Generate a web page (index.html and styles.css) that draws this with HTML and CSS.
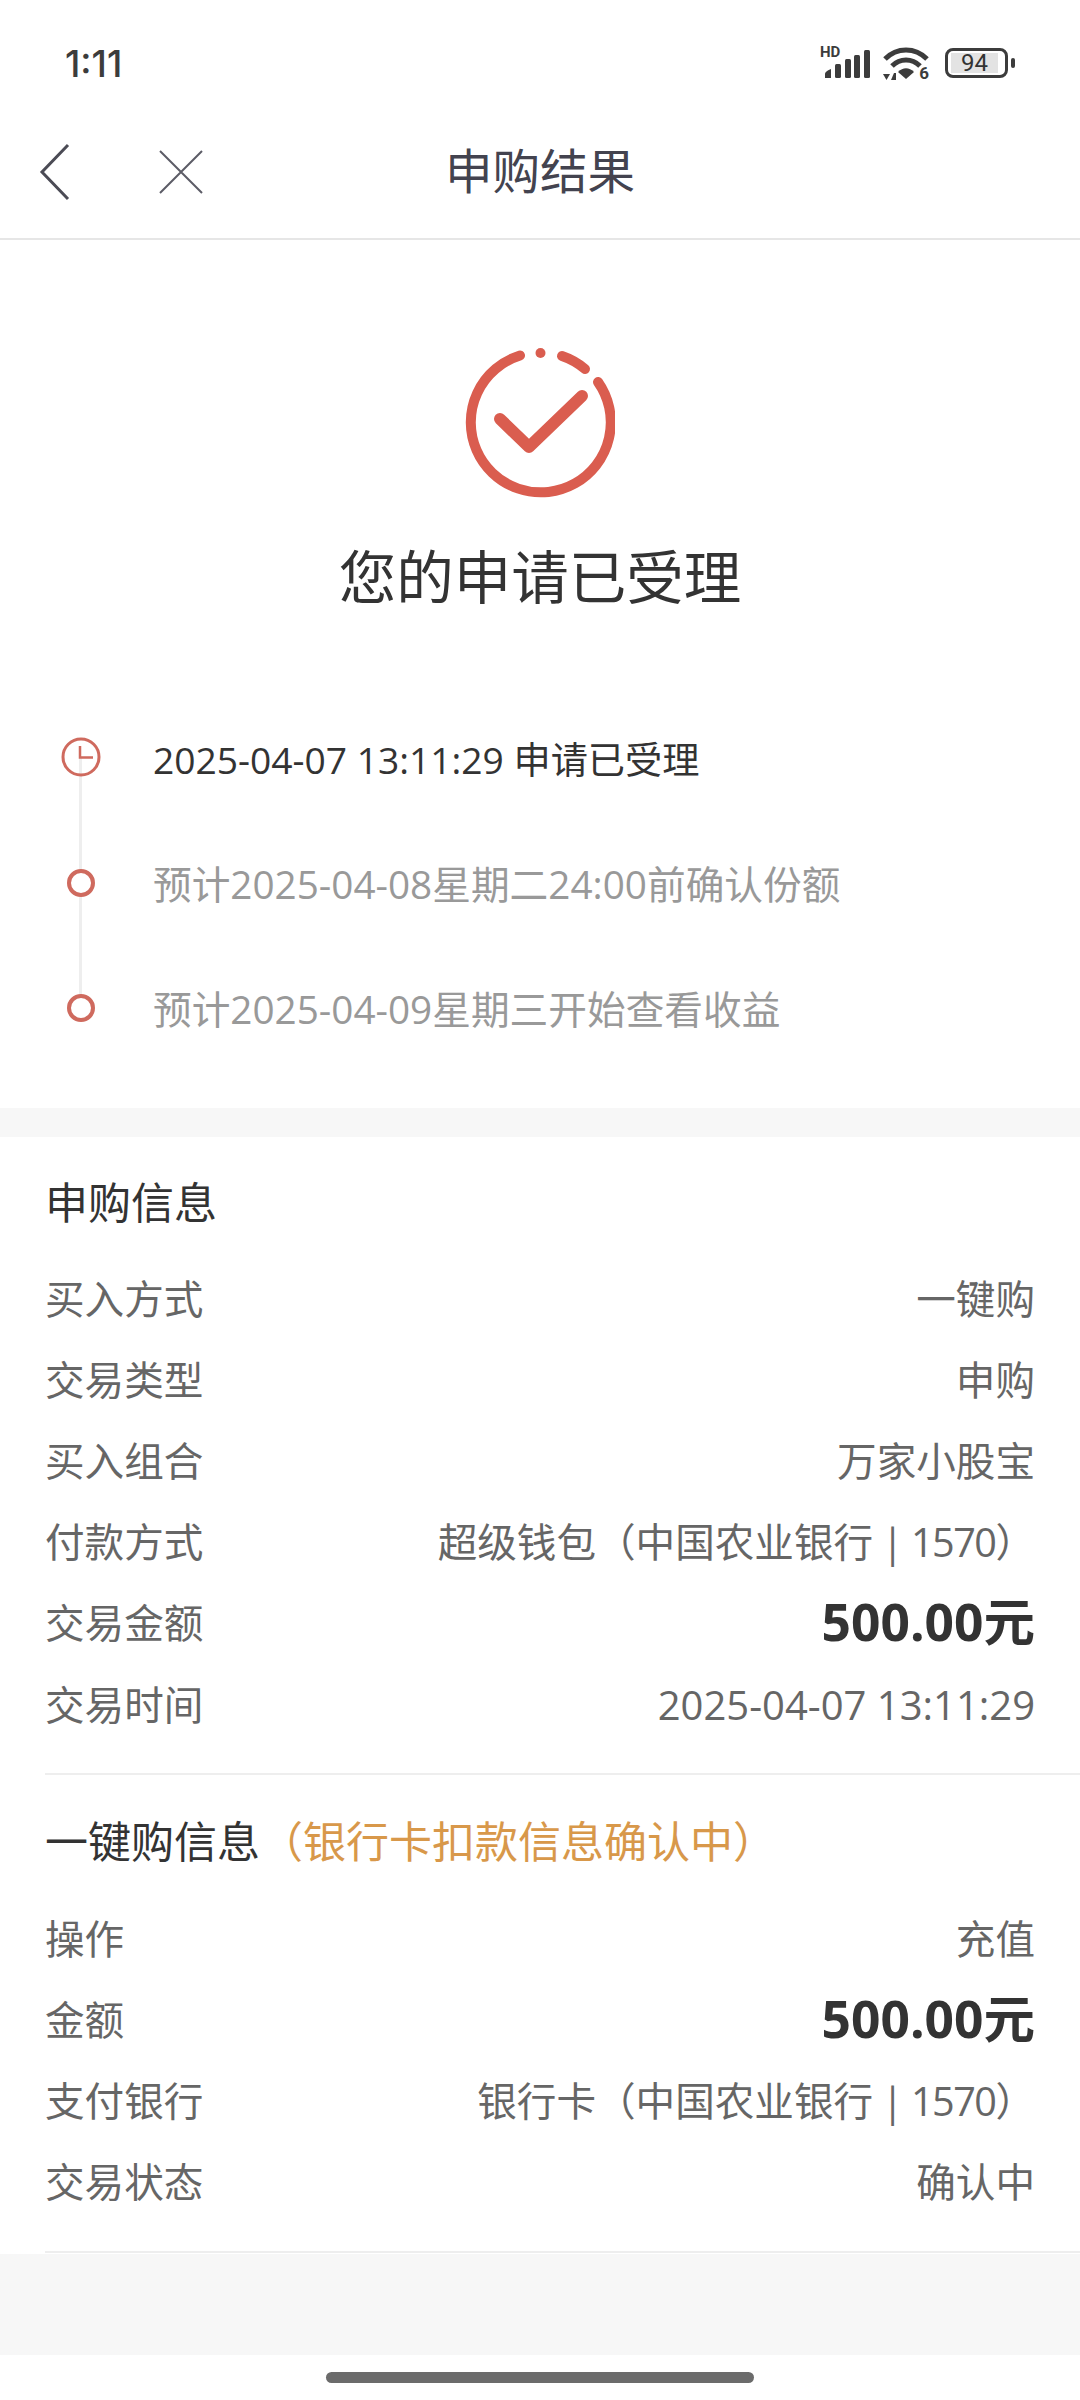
FILE: index.html
```html
<!DOCTYPE html>
<html lang="zh-CN">
<head>
<meta charset="utf-8">
<title>申购结果</title>
<link rel="stylesheet" href="styles.css">
</head>
<body>
<div class="phone">
  <header class="status">
    <span class="clock">1:11</span>
    <div class="status-icons">
      <span class="signal">
        <span class="hd">HD</span>
        <svg class="bars" width="45" height="28" viewBox="0 0 45 28"><g fill="#3c3c3c"><path d="M0 28V24C0 22 3 20 6 19V28Z"/><rect x="10" y="14" width="6" height="14" rx="1.500"/><rect x="20" y="9" width="6" height="19" rx="1.500"/><rect x="29" y="5" width="6" height="23" rx="1.500"/><rect x="39" y="0" width="6" height="28" rx="1.500"/></g></svg>
      </span>
      <span class="wifi">
        <svg width="46" height="35" viewBox="0 0 46 35"><g fill="none" stroke="#3c3c3c" stroke-width="5"><path d="M2 13C14 1 32 1 44 13"/><path d="M9 20C17 12 29 12 37 20"/></g><path d="M15 26C20 21 26 21 31 26L23 33Z" fill="#3c3c3c"/><g fill="#3c3c3c"><path d="M0 28h7l-3.500 6Z"/><path d="M8 34h5V27h-2Z"/></g></svg>
        <span class="wifi-6">6</span>
      </span>
      <span class="battery"><span class="battery-body"><span class="battery-fill">94</span></span><span class="battery-cap"></span></span>
    </div>
  </header>

  <nav class="nav">
    <svg class="back" width="32" height="58" viewBox="0 0 32 58"><path d="M29 2L3 29L29 56" fill="none" stroke="#4b4b55" stroke-width="3"/></svg>
    <svg class="close" width="44" height="44" viewBox="0 0 44 44"><path d="M1 1L43 43M43 1L1 43" fill="none" stroke="#5c5c66" stroke-width="2"/></svg>
    <h1 class="nav-title">申购结果</h1>
  </nav>

  <section class="result">
    <svg class="result-icon" width="150" height="150" viewBox="0 0 150 150"><g fill="none" stroke="#da5d4f" stroke-linecap="round" stroke-linejoin="round" stroke-width="10"><path d="M55 7.500A70 70 0 1 0 133 34"/><path d="M97 8A70 70 0 0 1 120 21"/><path class="tick" d="M35 71L64 99L117 48"/></g><circle cx="75.500" cy="5" r="5" fill="#da5d4f"/></svg>
    <h2 class="result-title">您的申请已受理</h2>
  </section>

  <ol class="timeline">
    <li class="step step-now">
      <span class="marker"><svg width="40" height="40" viewBox="0 0 40 40"><circle cx="20" cy="20" r="18" fill="none" stroke="#cf6a5e" stroke-width="3"/><path d="M19 9V20.500H32" fill="none" stroke="#cf6a5e" stroke-width="2.500"/></svg></span>
      <span class="step-text">2025-04-07 13:11:29 申请已受理</span>
    </li>
    <li class="step">
      <span class="marker"><span class="dot"></span></span>
      <span class="step-text">预计2025-04-08星期二24:00前确认份额</span>
    </li>
    <li class="step">
      <span class="marker"><span class="dot"></span></span>
      <span class="step-text">预计2025-04-09星期三开始查看收益</span>
    </li>
  </ol>

  <section class="info">
    <h3 class="info-title">申购信息</h3>
    <dl class="rows">
      <div class="row"><dt>买入方式</dt><dd>一键购</dd></div>
      <div class="row"><dt>交易类型</dt><dd>申购</dd></div>
      <div class="row"><dt>买入组合</dt><dd>万家小股宝</dd></div>
      <div class="row"><dt>付款方式</dt><dd>超级钱包（中国农业银行<span class="card"> | 1570</span>）</dd></div>
      <div class="row"><dt>交易金额</dt><dd class="amount">500.00元</dd></div>
      <div class="row"><dt>交易时间</dt><dd class="date">2025-04-07 13:11:29</dd></div>
    </dl>
    <div class="group">
      <h3 class="info-title">一键购信息<span class="pending">（银行卡扣款信息确认中）</span></h3>
      <dl class="rows">
        <div class="row"><dt>操作</dt><dd>充值</dd></div>
        <div class="row"><dt>金额</dt><dd class="amount">500.00元</dd></div>
        <div class="row"><dt>支付银行</dt><dd>银行卡（中国农业银行<span class="card"> | 1570</span>）</dd></div>
        <div class="row"><dt>交易状态</dt><dd>确认中</dd></div>
      </dl>
    </div>
  </section>

  <div class="footer-fill"></div>
  <div class="home-area"><span class="home-bar"></span></div>
</div>
</body>
</html>
```
FILE: styles.css
```css
* { box-sizing: border-box; margin: 0; padding: 0; }
html, body { background: #fff; }
body { font-family: "Open Sans", "Noto Sans CJK SC", sans-serif; }
.phone { width: 1080px; height: 2400px; display: flex; flex-direction: column; overflow: hidden; background: #fff; }
.phone > * { flex: none; }

.status { height: 122px; padding: 4px 65px 0 65px; display: flex; justify-content: space-between; align-items: center; color: #3c3c3c; }
.clock { font-family: Inter, sans-serif; font-size: 37px; font-weight: 500; }
.status-icons { display: flex; align-items: center; }
.signal { position: relative; width: 50px; height: 30px; }
.hd { position: absolute; left: 0; top: -3px; font-family: Roboto, sans-serif; font-size: 15px; font-weight: 700; line-height: 14px; }
.bars { position: absolute; right: 0; bottom: 0; }
.wifi { position: relative; width: 46px; height: 35px; display: block; margin-left: 13px; }
.wifi svg { display: block; }
.wifi-6 { position: absolute; right: 0; bottom: 0; font-family: Roboto, sans-serif; font-size: 17px; font-weight: 700; line-height: 15px; }
.battery { display: flex; align-items: center; gap: 3px; margin-left: 16px; }
.battery-body { width: 63px; height: 30px; padding: 2px 7px 2px 3px; border: 3px solid #3c3c3c; border-radius: 8px; display: flex; }
.battery-fill { width: 100%; background: #e3e3e3; font-family: Roboto, sans-serif; font-size: 24px; line-height: 20px; text-align: center; color: #333; }
.battery-cap { width: 4px; height: 10px; background: #3c3c3c; border-radius: 2px; }

.nav { height: 118px; padding-bottom: 22px; position: relative; display: flex; align-items: center; justify-content: center; border-bottom: 2px solid #e6e6e6; }
.back { position: absolute; left: 39px; top: 21px; }
.close { position: absolute; left: 159px; top: 28px; }
.nav-title { font-family: "Noto Sans CJK SC", sans-serif; font-size: 47.500px; font-weight: 400; color: #43434f; line-height: 1; }

.result { height: 497px; padding-top: 108px; display: flex; flex-direction: column; align-items: center; }
.result-icon { display: block; }
.tick { stroke-width: 12; }
.result-title { margin-top: 45px; font-family: "Noto Sans CJK SC", sans-serif; font-size: 57.500px; font-weight: 400; color: #333; line-height: 62px; }

.timeline { list-style: none; height: 371px; padding-left: 61px; display: flex; flex-direction: column; position: relative; }
.timeline::before { content: ""; position: absolute; left: 79px; top: 20px; height: 251px; width: 3px; background: #eeeeee; }
.step { flex: none; height: 125.500px; display: flex; align-items: flex-start; }
.marker { width: 40px; height: 40px; display: flex; align-items: center; justify-content: center; flex: none; position: relative; }
.marker svg { display: block; }
.dot { width: 28px; height: 28px; border: 4px solid #cf6a5e; border-radius: 50%; background: #fff; }
.step-text { margin: 1px 0 0 52px; font-size: 38.700px; line-height: 40px; color: #999; }
.step-now .step-text { margin-top: 3px; color: #333; font-size: 37.200px; }

.info { border-top: 29px solid #f7f7f7; padding: 38px 0 0 45px; height: 1146px; }
.info-title { font-family: "Noto Sans CJK SC", sans-serif; font-size: 43px; font-weight: 400; color: #333; line-height: 50px; }
.rows { margin-top: 33px; padding-right: 45px; display: flex; flex-direction: column; }
.row { height: 81.200px; display: flex; justify-content: space-between; align-items: center; font-size: 39.600px; line-height: 50px; color: #666; }
.row .amount { font-size: 51.500px; font-weight: 700; color: #333; margin-bottom: 4px; }
.row .date { font-size: 40px; }
.card { letter-spacing: -1.500px; }
.group { margin-top: 28px; border-top: 2px solid #eeeeee; padding-top: 39px; border-bottom: 2px solid #eeeeee; height: 480px; }
.group .rows { margin-top: 34px; }
.pending { color: #d8984a; }

.footer-fill { height: 101px; background: #f7f7f7; }
.home-area { flex: 1; display: flex; justify-content: center; padding-top: 17px; }
.home-bar { width: 428px; height: 11px; background: #6b6b6b; border-radius: 6px; }
```
